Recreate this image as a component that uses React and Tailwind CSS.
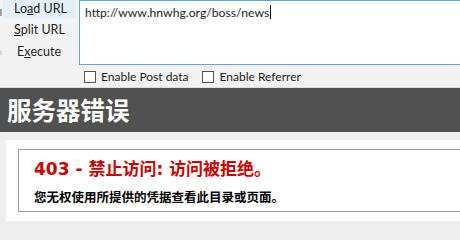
export default function App() {
  return (
    <div className="h-[240px] w-[460px] overflow-hidden bg-[#eeeeee]">
      {/* hackbar */}
      <div className="flex h-[88px] flex-col border-b border-[#dcdcdc] bg-[#f3f3f3] font-['Lato',sans-serif] text-[12px] text-[#1e1e1e]">
        <div className="flex h-[65px]">
          <div className="relative w-[79px] shrink-0 text-[12.5px]">
            <span className="absolute left-0 top-[9px] h-[7px] w-[2px] bg-[#9aa0a6]" />
            <span className="absolute left-0 top-[50px] h-[5px] w-[2px] rounded-full bg-[#c9dcf2]" />
            <div className="ml-[3px] mr-[3px] flex flex-col">
              <div className="flex h-[18px] items-center bg-[#e3effa] pl-[11px] leading-none">
                Lo<span className="underline">a</span>d URL
              </div>
              <div className="flex h-[24px] items-center pl-[11px] leading-none">
                <span className="underline">S</span>plit URL
              </div>
              <div className="flex h-[20px] items-center pl-[14px] leading-none">
                E<span className="underline">x</span>ecute
              </div>
            </div>
          </div>
          <div className="flex-1 border-y border-l border-[#5ea8e6] bg-white px-[5px] pt-[2px] text-[12.2px] leading-[18px]">
            http://www.hnwhg.org/boss/news<span className="ml-px inline-block h-[14px] w-px translate-y-[2px] bg-black" />
          </div>
        </div>
        <div className="flex items-center pl-[84px] pt-[6px] leading-none">
          <span className="h-[12px] w-[12px] border border-[#555] bg-white" />
          <span className="ml-[5px]">Enable Post data</span>
          <span className="ml-[13px] h-[12px] w-[12px] border border-[#555] bg-white" />
          <span className="ml-[6px]">Enable Referrer</span>
        </div>
      </div>

      {/* error page */}
      <div className="flex h-[44px] items-center bg-[#515151] pl-[7px] font-['Noto_Sans_CJK_SC',sans-serif] text-[24.5px] font-bold leading-none text-white">
        服务器错误
      </div>
      <div className="ml-[6px] mt-[8px] h-[81px] bg-white pl-[12px] pt-[9px]">
        <div className="h-[63px] border-y border-l border-[#a0a0a0] pl-[15px]">
          <div className="mt-[8px] font-['DejaVu_Sans','Noto_Sans_CJK_SC',sans-serif] text-[17px] font-bold leading-[22px] text-[#cc0000]">
            403 - 禁止访问: 访问被拒绝。
          </div>
          <div className="mt-[8px] font-['Noto_Sans_CJK_SC',sans-serif] text-[12.5px] font-bold leading-[18px] text-black">
            您无权使用所提供的凭据查看此目录或页面。
          </div>
        </div>
      </div>
    </div>
  );
}
